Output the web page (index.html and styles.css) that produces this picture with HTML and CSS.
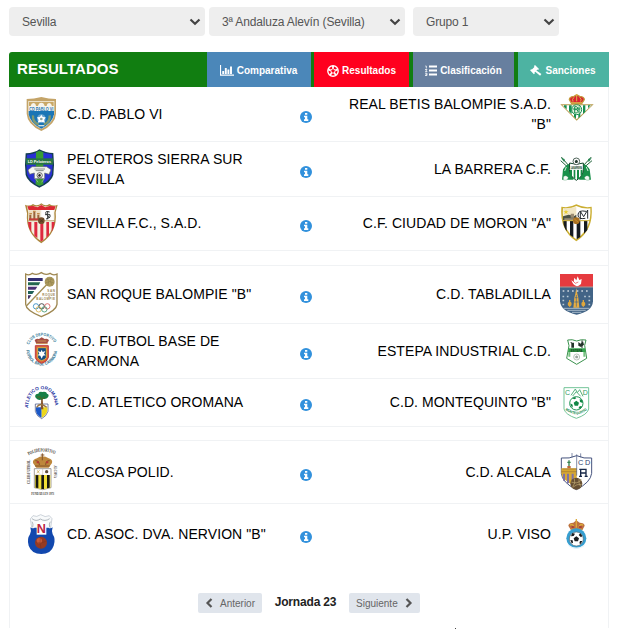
FILE: index.html
```
<!DOCTYPE html>
<html lang="es">
<head>
    <meta charset="UTF-8">
    <meta name="viewport" content="width=device-width, initial-scale=1.0">
    <title>Resultados</title>
    <link rel="stylesheet" href="styles.css">
</head>
<body>
    <!-- Shared icons -->
    <svg class="defs" width="0" height="0">
        <symbol id="info" viewBox="0 0 12 12">
            <circle cx="6" cy="6" r="6" fill="#3291dc"/>
            <path d="M5 2h2.3v1.7H5zM4 4.8h3.3v3.5h1V10H4V8.3h1V6.3H4z" fill="#fff"/>
        </symbol>
        <symbol id="chevron" viewBox="0 0 12 8">
            <path d="M1.5 1.5L6 5.7L10.5 1.5" fill="none" stroke="#444" stroke-width="2.2"/>
        </symbol>
    </svg>

    <!-- Filters -->
    <form class="filters">
        <div class="filter">
            <select><option>Sevilla</option></select>
            <svg class="arrow"><use href="#chevron"/></svg>
        </div>
        <div class="filter">
            <select><option>3ª Andaluza Alevín (Sevilla)</option></select>
            <svg class="arrow"><use href="#chevron"/></svg>
        </div>
        <div class="filter filter-group">
            <select><option>Grupo 1</option></select>
            <svg class="arrow"><use href="#chevron"/></svg>
        </div>
    </form>

    <section class="panel">
        <header class="panel-header">
            <h1>RESULTADOS</h1>
            <nav class="tabs">
                <a class="tab tab-compare"><svg width="14" height="11" viewBox="0 0 14 11"><path d="M.5 0v10.2H14" fill="none" stroke="#fff" stroke-width="1.2"/><path d="M3.200 9V6M5.800 9V3M8.400 9V4.500M11 9V1.500" fill="none" stroke="#fff" stroke-width="1.900"/></svg>Comparativa</a>
                <a class="tab tab-results"><svg width="12" height="12" viewBox="0 0 12 12"><circle cx="6" cy="6" r="5.200" fill="none" stroke="#fff" stroke-width="1.400"/><path d="M6 3.500V1M8.300 5.300l2.500-1M7.400 8l1.600 2.200M4.600 8L3 10.200M3.700 5.300l-2.500-1" fill="none" stroke="#fff" stroke-width="1.800"/><path d="M6 3.500l2.300 1.800L7.400 8H4.600l-.9-2.700z" fill="none" stroke="#fff"/></svg>Resultados</a>
                <a class="tab tab-table"><svg width="12" height="11" viewBox="0 0 12 11"><path d="M4 1.500h8M4 5.500h8M4 9.500h8" stroke="#fff" stroke-width="1.900"/><path d="M.3 1h1v2.500M0 4.500h2L.5 6.500H2.300M0 8.200h2v2.300H0M.5 9.300H2" fill="none" stroke="#fff" stroke-width=".8"/></svg>Clasificación</a>
                <a class="tab tab-sanctions"><svg width="12" height="11" viewBox="0 0 12 11"><path d="M5 0l4 4-1 1-.6-.4-1 1 5 3.500-1.300 1.600L5.200 6.800l-.7.7.4.8-1 1-3.800-4 1-1 .8.3L4.400 2 4 1z" fill="#fff"/></svg>Sanciones</a>
            </nav>
        </header>

        <div class="match row-1">
            <svg class="crest" width="34" height="34" viewBox="0 0 102 102">
                <path d="M8 6Q30 6 52 0Q74 6 96 6V50Q94 82 52 102Q10 82 8 50z" fill="#c4a468"/>
                <path d="M13 12H91V50Q88 78 52 96Q16 78 13 50z" fill="#f6f3ea"/>
                <path d="M14 42H90V52Q86 78 52 95Q18 78 14 52z" fill="#1b75b5"/>
                <path d="M15 14H89V27H84Q82 18 76 18Q69 18 68 27H62Q60 17 52 17Q44 17 42 27H36Q35 18 28 18Q22 18 20 27H15z" fill="#c9a866"/>
                <text x="52" y="41" font-size="14" textLength="72" lengthAdjust="spacingAndGlyphs" fill="#1b75b5" class="bold mid">CD PABLO VI</text>
                <path d="M27 55q-2 20 17 28M77 55q2 20-17 28" fill="none" stroke="#7e9973" stroke-width="7"/>
                <circle cx="52" cy="65" r="13" fill="#6ba6d2"/>
                <path d="M52 53l4 7 9 1-5 8 3 8-11-3-11 3 3-8-5-8 9-1z" fill="#fff"/>
                <circle cx="52" cy="66" r="4" fill="#8fa5a0"/>
                <path d="M43 86h18" stroke="#d5e1df" stroke-width="4"/>
            </svg>
            <span class="team">C.D. PABLO VI</span>
            <svg class="info"><use href="#info"/></svg>
            <span class="team away">REAL BETIS BALOMPIE S.A.D. "B"</span>
            <svg class="crest crest-raised" width="34" height="27" viewBox="0 0 102 81">
                <path d="M1 31H101L50 80z" fill="#b59a4b"/>
                <path d="M7 34H95L50 76z" fill="#fff"/>
                <path d="M12 34h8v12l-8-8zM27 34h8v26l-8-8zM42 34h6v40l-6-6zM55 34h6v33l-6 6zM69 34h7v19l-7 7zM84 34h8l-8 9z" fill="#168f50"/>
                <circle cx="50" cy="47" r="15" fill="#e8f1df" stroke="#168f50" stroke-width="3"/>
                <path d="M44 38V57M44 38h6q7 4 0 9h-6M50 47q9 4 0 10h-6M38 45H61M57 38V57" fill="none" stroke="#168f50" stroke-width="3"/>
                <path d="M35 29L28 17Q28 8 42 7L50 2L59 7Q73 8 73 17L65 29z" fill="#d92331" stroke="#c59a3b" stroke-width="4"/>
                <path d="M34 26H67M42 10q-7 6-3 13M59 10q7 6 3 13M50 0v22" stroke="#dcb34d" stroke-width="3" fill="none"/>
            </svg>
        </div>

        <div class="match row-2">
            <svg class="crest crest-home-raised" width="34" height="39" viewBox="0 0 102 117">
                <path d="M5 13Q32 12 46 1Q65 12 88 12Q92 48 88 78Q83 99 46 116Q10 99 5 78Q1 48 5 13z" fill="#153e52"/>
                <path d="M9 17Q32 15 46 6Q62 15 84 16Q88 46 84 76Q79 95 46 111Q14 95 9 76Q5 45 9 17z" fill="#2930d4"/>
                <path d="M36 10L46 5L58 10V106L46 111L35 106z" fill="#399c33"/>
                <path d="M6 28H87V47H6z" fill="#277442"/>
                <text x="46" y="42" font-size="13" textLength="70" lengthAdjust="spacingAndGlyphs" fill="#fff" class="bold mid">LD Peloteros</text>
                <path d="M24 53H68L81 62 75 76 62 72V89H31V72L17 76 12 63z" fill="#f6f7f3" stroke="#626c68" stroke-width="2"/>
                <path d="M31 60H63M35 65H59" stroke="#818888" stroke-width="3"/>
                <circle cx="47" cy="79" r="8" fill="#fff" stroke="#252525" stroke-width="2"/>
                <path d="M47 74l4 4-2 5h-5l-2-5z" fill="#252525"/>
                <path d="M35 90l7 10M60 90l-7 10" stroke="#b6c6a7" stroke-width="2"/>
            </svg>
            <span class="team">PELOTEROS SIERRA SUR SEVILLA</span>
            <svg class="info"><use href="#info"/></svg>
            <span class="team away">LA BARRERA C.F.</span>
            <svg class="crest crest-up" width="34" height="27" viewBox="0 0 102 81">
                <path d="M4 6l24 28M94 6L68 34M2 17l24 22M96 17L70 39" stroke="#25633d" stroke-width="3"/>
                <path d="M3 9l11 3-1 10zM95 9l-11 3 2 10z" fill="#268650"/>
                <path d="M35 24Q19 27 9 43L6 74H40l6-22M62 24Q79 27 89 43L93 74H58l-6-22" fill="#18904a"/>
                <path d="M29 24Q49 32 70 24V43Q69 65 49 76Q29 64 28 43z" fill="#fff" stroke="#184b2f" stroke-width="3"/>
                <path d="M30 44H36V63H30zM41 44h5v27h-5zM51 44h6v28h-6zM62 44h5v18h-5z" fill="#158b45"/>
                <path d="M31 33H67V44H31z" fill="#e6f0e8"/>
                <text x="49" y="43" font-size="10" textLength="34" lengthAdjust="spacingAndGlyphs" fill="#173d29" class="bold mid">LA BARRERA</text>
                <circle cx="49" cy="19" r="10" fill="#fff" stroke="#50645a" stroke-width="3"/>
                <path d="M49 14l5 4-2 6h-6l-2-6z" fill="#263d31"/>
                <path d="M10 66q8-9 15 2-3 10-15 7zM88 66q-8-9-15 2 3 10 15 7z" fill="#f4faf6" stroke="#428e5d"/>
                <path d="M19 36l-5 12M79 36l5 12" stroke="#d7eadd" stroke-width="3"/>
            </svg>
        </div>

        <div class="match row-3">
            <svg class="crest" width="34" height="41" viewBox="0 0 102 123">
                <path d="M3 5Q17 11 27 3Q40 11 52 1Q64 11 76 3Q88 11 101 5L95 28Q101 88 52 121Q4 90 9 31z" fill="#ad873e"/>
                <path d="M9 9Q18 13 28 8Q40 14 52 5Q64 14 76 8Q87 13 96 9L91 29Q97 84 52 115Q8 88 13 30z" fill="#f4efdf"/>
                <path d="M10 10L28 9L40 13L52 6L64 13L76 9L95 10L91 21H14z" fill="#dc2832"/>
                <path d="M12 57H22V87Q13 75 12 57zM31 57H40V105L31 98zM49 57h9v54l-6 4-3-2zM67 57h8v40l-8 7zM83 57h9q-1 17-9 30z" fill="#de283e"/>
                <path d="M14 53H91" stroke="#a68b4e" stroke-width="3"/>
                <path d="M14 22H49V52H14z" fill="#eddcbf"/>
                <path d="M19 48V35M31 48V27M43 48V35" stroke="#99633b" stroke-width="6"/>
                <path d="M15 46h34v6H15z" fill="#c43c36"/><path d="M16 32h8M27 25h8M39 32h8" stroke="#c28c4a" stroke-width="4"/>
                <path d="M52 21H89V52H52z" fill="#fff"/>
                <path d="M77 27Q62 22 66 33Q82 45 66 48M71 24V49M63 35H78Q80 44 74 46" fill="none" stroke="#353a39" stroke-width="3"/>
                <circle cx="52" cy="53" r="10" fill="#77502b"/><path d="M46 48l12 10M59 48L46 59" stroke="#412d1a" stroke-width="2"/>
            </svg>
            <span class="team">SEVILLA F.C., S.A.D.</span>
            <svg class="info"><use href="#info"/></svg>
            <span class="team away">C.F. CIUDAD DE MORON "A"</span>
            <svg class="crest" width="34" height="38" viewBox="0 0 102 114">
                <path d="M4 8Q28 13 49 1Q73 13 95 8Q101 78 49 112Q-2 78 4 8z" fill="#cbae31"/>
                <path d="M9 13Q30 16 49 6Q71 16 91 13Q95 74 49 106Q4 76 9 13z" fill="#fff"/>
                <path d="M10 51H20V82Q10 68 10 51zM30 51H40V100L30 93zM50 51H61V99L50 106zM72 51H82V78L72 89z" fill="#161b20"/>
                <path d="M49 9L10 14V50H49z" fill="#f1e6c4"/>
                <path d="M9 37l17-5 17 4 6-4v17H9z" fill="#4a5045"/><path d="M13 43H48v6H13zM32 29h10v12H32z" fill="#9b8c72"/>
                <path d="M18 17l2 5h6l-5 3 2 6-5-4-5 4 2-6-5-3h6z" fill="#e7cb2f"/>
                <path d="M78 22Q54 17 54 33Q54 47 76 43M61 46V22l10 16 12-20v26" fill="none" stroke="#242a30" stroke-width="3"/>
                <path d="M8 50H92" stroke="#cbae31" stroke-width="3"/>
                <circle cx="49" cy="50" r="10" fill="#aa711f"/><path d="M43 45l12 10" stroke="#d79f3c" stroke-width="2"/>
            </svg>
        </div>

        <div class="match row-4">
            <svg class="crest crest-down" width="34" height="46" viewBox="0 0 102 138">
                <path d="M5 6Q16 12 25 4Q38 11 52 2Q65 11 78 4Q88 12 99 6V97Q97 116 52 134Q6 116 5 97z" fill="#fff" stroke="#9e8750" stroke-width="4"/>
                <path d="M12 18H56V27H12z" fill="#322e72"/><path d="M12 31H49L44 40H12z" fill="#24684f"/><path d="M12 44H40L34 53H12z" fill="#4b3275"/><path d="M12 57H31L25 66H12z" fill="#206157"/><path d="M12 70H22L15 80H12z" fill="#413060"/>
                <path d="M72 34L7 102" stroke="#a28d55" stroke-width="4"/>
                <circle cx="77" cy="29" r="15" fill="#ad9a5d"/><path d="M64 25q13-9 26 0M64 33q13-9 26 0M70 17q8 12 1 24M82 16q-7 13 3 25" stroke="#786d40" fill="none"/>
                <text x="93" y="61" font-size="9" text-anchor="end" textLength="23" fill="#9a834f" class="bold">SAN</text>
                <text x="93" y="73" font-size="9" text-anchor="end" textLength="38" fill="#9a834f" class="bold">ROQUE</text>
                <text x="93" y="85" font-size="9" text-anchor="end" textLength="56" fill="#9a834f" class="bold">BALOMPIE</text>
                <g fill="none" stroke-width="2.500"><circle cx="36" cy="103" r="8" stroke="#348ac0"/><circle cx="53" cy="103" r="8" stroke="#323232"/><circle cx="70" cy="103" r="8" stroke="#d65555"/><circle cx="44" cy="112" r="8" stroke="#dcb54c"/><circle cx="61" cy="112" r="8" stroke="#419971"/></g>
            </svg>
            <span class="team">SAN ROQUE BALOMPIE "B"</span>
            <svg class="info"><use href="#info"/></svg>
            <span class="team away">C.D. TABLADILLA</span>
            <svg class="crest" width="34" height="41" viewBox="0 0 102 123">
                <path d="M0 0H99V82Q97 113 50 122Q3 113 0 82z" fill="#426486"/><path d="M0 0H99V38H0z" fill="#e63b3f"/>
                <path d="M34 19l7 4 2-12 6 8 4-12 5 11 7-3-2 15q-8 7-12 7-11-2-17-18z" fill="#fff"/><path d="M38 20l8 8 9-4" fill="none" stroke="#e63b3f" stroke-width="2"/>
                <path d="M0 39H99" stroke="#e5b9a1" stroke-width="2"/>
                <path d="M49 42l3 17 3 12 3 30H40l3-30 3-12z" fill="#e7ad42"/><path d="M45 71h8M43 84h12M49 63v35" stroke="#426486" stroke-width="2"/>
                <path d="M8 51H91" stroke="#ccd4dc" stroke-width="5" stroke-dasharray="5 9"/>
                <path d="M10 65v31M23 65v10M75 65v10M88 65v31" stroke="#bacbd6" stroke-width="5" stroke-dasharray="5 7"/>
                <ellipse cx="29" cy="90" rx="6" ry="7" fill="#dfa73c"/><ellipse cx="70" cy="90" rx="6" ry="7" fill="#dfa73c"/><path d="M29 78v20M70 78v20" stroke="#dfa73c" stroke-width="4"/>
                <path d="M11 103H88M22 109H77M36 115H64" stroke="#d9e2e8" stroke-width="2"/>
            </svg>
        </div>

        <div class="match row-5">
            <svg class="crest crest-home-raised" width="34" height="36" viewBox="0 0 102 108">
                <path id="arc5a" d="M15 38A42 42 0 0 1 92 35" fill="none"/><path id="arc5b" d="M7 54A46 46 0 0 0 99 54" fill="none"/>
                <text font-size="13" fill="#3d829e" class="bold"><textPath href="#arc5a" textLength="94" lengthAdjust="spacingAndGlyphs">CLUB DEPORTIVO</textPath></text>
                <text font-size="13" fill="#2d7290" class="bold"><textPath href="#arc5b" textLength="142" lengthAdjust="spacingAndGlyphs">FUTBOL BASE CARMONA</textPath></text>
                <path d="M37 35L32 25Q35 18 45 21L53 16L62 21Q72 18 75 25L69 35z" fill="#a44d43"/><path d="M36 35H71M40 27H67" stroke="#cb9453" stroke-width="3"/>
                <path d="M34 41H73V77Q69 89 53 94Q36 88 34 77z" fill="#df633b" stroke="#bb3f3f" stroke-width="3"/>
                <path d="M41 47H67V77Q62 84 53 86Q44 84 41 77z" fill="#174e83" stroke="#dbb13d" stroke-width="3"/>
                <path d="M53 53l3 7 8-3-4 8 5 5-8 1-4 9-4-9-8-1 5-5-4-8 8 3z" fill="#fff"/>
            </svg>
            <span class="team">C.D. FUTBOL BASE DE CARMONA</span>
            <svg class="info"><use href="#info"/></svg>
            <span class="team away">ESTEPA INDUSTRIAL C.D.</span>
            <svg class="crest" width="34" height="27" viewBox="0 0 102 81">
                <path d="M23 6Q37 3 50 9Q64 3 78 6L74 22 80 61 50 79 20 61 27 23z" fill="#fff" stroke="#3a914d" stroke-width="3"/>
                <path d="M26 31H75L77 42H24z" fill="#35a54c"/><path d="M25 42h6v14h-6zM70 42h6v14h-6z" fill="#77c181"/>
                <path d="M34 14h8v15h-8zM55 12l7 5 7-7 3 10-9 7-8-4z" fill="#23332a"/><path d="M32 12l6 6M66 7v23" stroke="#23332a" stroke-width="3"/>
                <text x="50" y="41" font-size="10" textLength="35" lengthAdjust="spacingAndGlyphs" fill="#163c20" class="bold mid">ESTEPA</text>
                <circle cx="50" cy="57" r="9" fill="#fff" stroke="#9aa59d" stroke-width="2"/><path d="M50 52l5 4-2 5h-6l-2-5z" fill="#9ba39e"/>
            </svg>
        </div>

        <div class="match row-6">
            <svg class="crest" width="34" height="34" viewBox="0 0 102 102">
                <path id="arc6" d="M12 69Q17 13 54 13Q91 13 94 68" fill="none"/>
                <text font-size="14" fill="#2532a1" class="bold"><textPath href="#arc6" textLength="148" lengthAdjust="spacingAndGlyphs">ATLETICO OROMANA</textPath></text>
                <path d="M34 57H72V79Q67 94 53 101Q38 94 34 79z" fill="#fff" stroke="#334278" stroke-width="2"/>
                <path d="M36 67H53V98Q37 91 36 77z" fill="#1b58c7"/><path d="M53 67H70V77Q67 91 53 98z" fill="#ecd71d"/>
                <path d="M50 73L52 39H56L58 73" fill="#86532a"/><path d="M38 67q10-17 30 0" fill="none" stroke="#987342" stroke-width="4"/>
                <path d="M34 37q-3-10 9-11 1-7 12-5 13-2 14 5 8 2 3 11-6 8-17 4-12 9-21-4z" fill="#168047"/>
                <path d="M39 36h9l5 7 9-8" fill="none" stroke="#426d2f" stroke-width="4"/>
            </svg>
            <span class="team">C.D. ATLETICO OROMANA</span>
            <svg class="info"><use href="#info"/></svg>
            <span class="team away">C.D. MONTEQUINTO "B"</span>
            <svg class="crest crest-down" width="34" height="32" viewBox="0 0 102 96">
                <path d="M12 2H86V66Q82 83 49 94Q16 83 12 66z" fill="#fff" stroke="#73c498" stroke-width="3"/>
                <text x="15" y="24" font-size="21" fill="#2a9b63">C</text><text x="68" y="24" font-size="21" fill="#2a9b63">D</text>
                <path d="M33 25L46 6L52 17L59 8L69 28M38 27L49 14L62 28" fill="none" stroke="#56b27e" stroke-width="3"/>
                <circle cx="49" cy="49" r="20" fill="#fff" stroke="#209656" stroke-width="3"/>
                <path d="M49 41l8 6-3 9H44l-3-9zM36 34l7 3 6-3-4-4zM59 36l8 4 1 8-8-3zM31 49l7 4v9l-5-5zM59 58l7-1-5 8-6-1z" fill="#118745"/>
                <path id="arc6b" d="M16 68Q49 96 84 67" fill="none"/><text font-size="11" fill="#168a4c" class="bold"><textPath href="#arc6b" textLength="72" lengthAdjust="spacingAndGlyphs">MONTEQUINTO</textPath></text>
            </svg>
        </div>

        <div class="match row-7">
            <svg class="crest" width="34" height="50" viewBox="0 0 102 150">
                <path id="arc7" d="M14 25Q53 3 96 23" fill="none"/><text font-size="15" fill="#3d3833" class="serif bold"><textPath href="#arc7" textLength="82" lengthAdjust="spacingAndGlyphs">POLIDEPORTIVO</textPath></text>
                <text transform="translate(19 111) rotate(-90)" font-size="13" textLength="73" lengthAdjust="spacingAndGlyphs" fill="#3d3833" class="serif bold">CLUB FUTBOL</text>
                <text transform="translate(90 55) rotate(90)" font-size="13" textLength="38" lengthAdjust="spacingAndGlyphs" fill="#3d3833" class="serif bold">ALCOSA</text>
                <text x="56" y="145" font-size="11" textLength="69" lengthAdjust="spacingAndGlyphs" fill="#3d3833" class="serif bold mid">FUNDADA EN 1973</text>
                <path d="M37 62L27 48Q25 37 39 34Q47 28 55 28Q65 28 74 34Q87 38 84 48L74 62z" fill="#bd873c"/>
                <path d="M55 19V40M50 24H61M33 57H77M34 41q12-1 12 13M77 41q-12-1-12 13" stroke="#855529" stroke-width="3" fill="none"/><path d="M38 46h7M66 46h7" stroke="#b63834" stroke-width="6"/>
                <path d="M31 65H81V122L56 128L31 122z" fill="#fff" stroke="#76716a" stroke-width="2"/>
                <path d="M33 84H79V122L56 127L33 122z" fill="#f1df35"/><path d="M35 84h8v39l-8-1zM52 84h8v42h-8zM69 84h8v38l-8 2z" fill="#171813"/>
                <path d="M56 66V84H31" stroke="#9b8860" fill="none"/><circle cx="68" cy="74" r="5" fill="#61513c"/><path d="M38 78l9-8M40 70l6 9" stroke="#c4a33c" stroke-width="2"/>
            </svg>
            <span class="team">ALCOSA POLID.</span>
            <svg class="info"><use href="#info"/></svg>
            <span class="team away">C.D. ALCALA</span>
            <svg class="crest" width="34" height="38" viewBox="0 0 102 114">
                <path d="M4 15Q28 18 50 8Q72 18 95 15V61Q92 88 49 110Q6 88 4 61z" fill="#fff" stroke="#46547e" stroke-width="3"/>
                <path d="M4 46H50V102Q6 82 4 61z" fill="#d7a833"/><path d="M12 62v21M24 62v29M38 62v32" stroke="#7e72a4" stroke-width="6"/><path d="M4 56H50M8 48H50" stroke="#9f7730" stroke-width="2"/>
                <path d="M27 22V39M22 28H32" stroke="#34814f" stroke-width="4"/><path d="M22 39h10v7H22z" fill="#bc673c"/>
                <path d="M50 4V68M36 0V13M62 1v12" stroke="#46547e" stroke-width="2"/>
                <text x="54" y="37" font-size="22" fill="#303e6f" textLength="37">CD</text>
                <path d="M62 70V49h16v21M62 60H78M57 70h9M74 70h9M58 49h20" fill="none" stroke="#172747" stroke-width="4"/>
                <circle cx="49" cy="92" r="18" fill="#665034"/><path d="M34 87q17 8 31-7M38 103q12-11 27-9M43 77q5 14-5 24M57 77q-2 15 5 24" stroke="#c4ad74" stroke-width="2" fill="none"/>
            </svg>
        </div>

        <div class="match row-8">
            <svg class="crest" width="34" height="42" viewBox="0 0 102 126">
                <path d="M27 8Q38 14 50 5Q64 15 76 8L84 17 79 50H24L19 18z" fill="#f8fafb" stroke="#b3bdc7" stroke-width="2"/>
                <path d="M24 17q12 10 25 1 14 9 28-1M24 26q5 6 2 17M79 26q-5 6-2 17" fill="none" stroke="#89929b" stroke-width="2"/>
                <path d="M19 43Q24 48 32 44H73Q80 48 86 43Q82 54 86 64Q96 78 89 98Q81 123 52 123Q23 123 14 98Q8 78 18 64Q23 54 19 43z" fill="#1248ae"/>
                <path d="M38 28H67V65H38z" fill="#fff"/><text x="52" y="60" font-size="38" fill="#ba2342" class="bold mid">N</text>
                <circle cx="51" cy="89" r="18" fill="#963b24"/><circle cx="46" cy="83" r="8" fill="#c95b39"/><path d="M35 87q17 7 33-3M49 73q-3 17 2 33" fill="none" stroke="#6f2d1d"/>
            </svg>
            <span class="team">CD. ASOC. DVA. NERVION "B"</span>
            <svg class="info"><use href="#info"/></svg>
            <span class="team away">U.P. VISO</span>
            <svg class="crest" width="34" height="30" viewBox="0 0 102 90">
                <path d="M33 34L25 20Q26 11 40 11L49 4L59 11Q73 11 74 20L67 34z" fill="#bd713f"/><path d="M49 0v26M34 31H65M30 19q8-7 12 6M69 19q-8-7-12 6" fill="none" stroke="#dca93a" stroke-width="4"/><path d="M35 24h8M57 24h8" stroke="#a22f37" stroke-width="5"/>
                <circle cx="49" cy="58" r="30" fill="#369fd1"/><circle cx="49" cy="60" r="21" fill="#fff" stroke="#576670" stroke-width="2"/>
                <path d="M49 52l8 6-3 9H44l-3-9zM37 42l8 2-4 7-8 1zM61 43l6 8-4 4-7-7zM31 63l7 1 1 8-4 1zM60 66h7l-5 9-4-2z" fill="#1b1d20"/>
                <path d="M22 75Q49 96 76 75L71 83Q49 95 28 83z" fill="#e9f5fb"/>
            </svg>
        </div>

        <footer class="pager">
            <button><svg width="8" height="10" viewBox="0 0 8 10"><path d="M6.500 1L2.500 5l4 4" fill="none" stroke="#555" stroke-width="2.200"/></svg>Anterior</button>
            <strong>Jornada 23</strong>
            <button>Siguiente<svg width="8" height="10" viewBox="0 0 8 10"><path d="M1.500 1l4 4-4 4" fill="none" stroke="#555" stroke-width="2.200"/></svg></button>
        </footer>
        <div class="speck"></div>
    </section>
</body>
</html>
```
FILE: styles.css
```
* {
    box-sizing: border-box;
}
html {
    overflow: hidden;
}
body {
    font-family: "Liberation Sans", Arial, sans-serif;
    margin: 0;
    padding: 7px 10px 0 9px;
    height: 629px;
    background: #fff;
    color: #000;
    display: flex;
    flex-direction: column;
    overflow: hidden;
}
.defs {
    position: absolute;
}
.filters {
    display: flex;
    gap: 4px;
    margin-bottom: 16px;
}
.filter {
    position: relative;
    width: 196px;
}
.filter-group {
    width: 146px;
    margin-left: 4px;
}
.filter select {
    display: block;
    appearance: none;
    width: 100%;
    height: 29px;
    padding: 0 13px;
    border: none;
    border-radius: 4px;
    background: #eee;
    color: #555;
    font-family: inherit;
    font-size: 12px;
    letter-spacing: -0.14px;
}
.arrow {
    position: absolute;
    right: 4px;
    top: 11px;
    width: 12px;
    height: 8px;
    pointer-events: none;
}
.panel {
    flex: 1;
    display: flex;
    flex-direction: column;
}
.panel-header {
    display: flex;
    justify-content: space-between;
    height: 35px;
    flex-shrink: 0;
    background: #117e11;
    border-radius: 3px 0 0 0;
}
h1 {
    margin: 0;
    padding-left: 8px;
    font-size: 15px;
    line-height: 34px;
    letter-spacing: 0.05px;
    color: #fff;
}
.tabs {
    display: flex;
}
.tab {
    display: flex;
    align-items: center;
    justify-content: center;
    gap: 3px;
    padding-top: 2px;
    color: #fff;
    font-size: 10px;
    font-weight: bold;
}
.tab-compare {
    width: 104px;
    margin-right: 3px;
    padding-right: 1px;
    background: #4b87b9;
}
.tab-results {
    width: 95px;
    margin-right: 4px;
    background: #ff001e;
}
.tab-table {
    width: 101px;
    margin-right: 4px;
    background: #677f9f;
}
.tab-sanctions {
    width: 91px;
    padding-right: 1px;
    background: #4db3a2;
}
.match {
    display: flex;
    align-items: center;
    flex-shrink: 0;
    height: 55px;
    padding: 0 14px;
    border: 1px solid #f0f2f4;
    border-top: none;
}
.match .crest {
    flex-shrink: 0;
    overflow: visible;
}
.crest-raised {
    margin-bottom: 13px;
}
.crest-home-raised {
    margin-bottom: 2px;
}
.crest-up {
    margin-bottom: 1px;
}
.crest-down {
    margin-top: 2px;
}
.team {
    width: 209px;
    margin-left: 9px;
    font-size: 14px;
    line-height: 20px;
    letter-spacing: 0.07px;
}
.away {
    margin: 0 9px 0 30px;
    text-align: right;
}
.info {
    width: 12px;
    height: 12px;
    margin: 6px 0 0 24px;
    flex-shrink: 0;
}
.row-3 {
    height: 54px;
    margin-bottom: 14px;
    padding-bottom: 1px;
}
.row-4 {
    height: 59px;
    padding-bottom: 1px;
    border-top: 1px solid #f0f2f4;
}
.row-6 {
    height: 48px;
    margin-bottom: 13px;
    padding-bottom: 1px;
}
.row-7 {
    height: 64px;
    border-top: 1px solid #f0f2f4;
}
.row-8 {
    height: 61px;
    padding-bottom: 2px;
    border-bottom: none;
}
.row-3, .row-6 {
    position: relative;
}
/* keeps the side borders running through the gaps between blocks */
.row-3::after, .row-6::after {
    content: "";
    position: absolute;
    left: -1px;
    right: -1px;
    top: 100%;
    height: 15px;
    border: solid #f0f2f4;
    border-width: 0 1px;
}
.pager {
    display: flex;
    align-items: center;
    justify-content: center;
    flex-shrink: 0;
    height: 63px;
    padding: 13px 0 0;
    border: solid #f0f2f4;
    border-width: 0 1px;
}
.pager strong {
    width: 87px;
    padding-bottom: 2px;
    text-align: center;
    font-size: 12px;
    letter-spacing: -0.18px;
    color: #222;
}
.pager button {
    display: flex;
    align-items: center;
    justify-content: space-between;
    width: 64px;
    height: 20px;
    padding: 0 7px;
    border: none;
    border-radius: 2px;
    background: #e0e5ec;
    color: #666;
    font-family: inherit;
    font-size: 10px;
}
.pager button:last-child {
    width: 71px;
}
.speck {
    width: 1px;
    height: 1px;
    margin-left: 446px;
    background: #444;
}
.bold {
    font-weight: bold;
}
.mid {
    text-anchor: middle;
}
.serif {
    font-family: "Liberation Serif", serif;
}
```
